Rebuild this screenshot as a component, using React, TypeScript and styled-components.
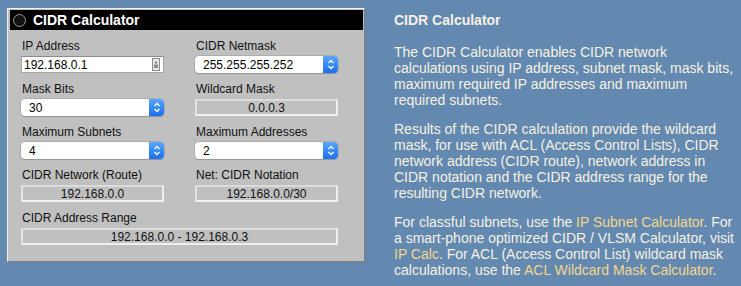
import React from "react";
import styled, { createGlobalStyle } from "styled-components";

const Global = createGlobalStyle`
  html, body { margin: 0; padding: 0; background: #6389b0; }
  body { font-family: "Liberation Sans", Arial, sans-serif; width: 741px; height: 286px; overflow: hidden; }
`;

const Page = styled.div`
  display: flex;
  align-items: flex-start;
  width: 741px;
  height: 286px;
`;

const Panel = styled.div`
  margin: 8px 0 0 7px;
  width: 353px;
  background: #c0c0c0;
  border-top: 1px solid #f2f2f2;
  border-left: 1px solid #f2f2f2;
  border-right: 1px solid #7d7d7d;
  border-bottom: 1px solid #7d7d7d;
  padding: 1px 1px 16px 2px;
`;

const Header = styled.div`
  height: 20px;
  background: #000;
  display: flex;
  align-items: center;
  gap: 7px;
  padding-left: 3px;
  color: #fff;
  font-weight: bold;
  font-size: 14px;
`;

const Radio = styled.span`
  width: 11px;
  height: 11px;
  border-radius: 50%;
  border: 1px solid #9a9a9a;
  background: #111;
  display: inline-block;
`;

const Grid = styled.div`
  display: grid;
  grid-template-columns: 143px 143px;
  column-gap: 31px;
  row-gap: 9px;
  padding: 9px 0 0 11px;
`;

const Field = styled.div<{ $wide?: boolean }>`
  display: flex;
  flex-direction: column;
  grid-column: ${(p) => (p.$wide ? "1 / span 2" : "auto")};
`;

const Label = styled.div`
  font-size: 12px;
  line-height: 14px;
  color: #111;
  margin: 0 0 3px 1px;
  white-space: nowrap;
`;

const TextInput = styled.div`
  height: 17px;
  box-sizing: border-box;
  background: #fff;
  border: 1px solid #a6a6a6;
  border-top-color: #8c8c8c;
  display: flex;
  align-items: center;
  justify-content: space-between;
  padding: 0 3px 0 2px;
  font-size: 12px;
  color: #000;
`;

const SelectBox = styled.div`
  height: 17px;
  box-sizing: border-box;
  background: #fff;
  border-radius: 4px;
  box-shadow: 0 0 0 0.5px #9a9a9a, 0 1px 1px rgba(0, 0, 0, 0.25);
  display: flex;
  align-items: center;
  overflow: hidden;
  font-size: 12px;
  color: #000;
`;

const SelectValue = styled.span`
  flex: 1;
  padding-left: 8px;
`;

const Arrow = styled.span`
  width: 15px;
  height: 100%;
  background: linear-gradient(#5aa6fb, #1a6ff0);
  display: flex;
  align-items: center;
  justify-content: center;
`;

const Output = styled.div`
  height: 17px;
  box-sizing: border-box;
  border: 2px solid #f0f0f0;
  border-top-color: #dcdcdc;
  border-left-color: #e4e4e4;
  display: flex;
  align-items: center;
  justify-content: center;
  font-size: 12px;
  color: #111;
`;

const Info = styled.div`
  margin: 12px 0 0 29px;
  width: 345px;
  color: #f6f1e4;
  font-size: 14px;
  line-height: 16px;
`;

const InfoTitle = styled.div`
  font-weight: bold;
  margin-bottom: 16px;
`;

const Para = styled.p`
  margin: 0 0 13px 0;
`;

const Link = styled.span`
  color: #f5d58c;
`;

const Chevrons = () => (
  <svg width="8" height="11" viewBox="0 0 8 11">
    <path d="M1.5 4 L4 1.5 L6.5 4 M1.5 7 L4 9.5 L6.5 7" fill="none" stroke="#fff" strokeWidth="1.3" />
  </svg>
);

const KeyIcon = () => (
  <svg width="8" height="13" viewBox="0 0 8 13">
    <rect x="0.5" y="0.5" width="7" height="12" fill="#e8e8e8" stroke="#8a8a8a" />
    <circle cx="4" cy="4.5" r="1.3" fill="#8a8a8a" />
    <rect x="2" y="6.5" width="4" height="3.5" fill="#8a8a8a" />
  </svg>
);

const Select = ({ value }: { value: string }) => (
  <SelectBox>
    <SelectValue>{value}</SelectValue>
    <Arrow>
      <Chevrons />
    </Arrow>
  </SelectBox>
);

export default function App() {
  return (
    <Page>
      <Global />
      <Panel>
        <Header>
          <Radio />
          CIDR Calculator
        </Header>
        <Grid>
          <Field>
            <Label>IP Address</Label>
            <TextInput>
              <span>192.168.0.1</span>
              <KeyIcon />
            </TextInput>
          </Field>
          <Field>
            <Label>CIDR Netmask</Label>
            <Select value="255.255.255.252" />
          </Field>
          <Field>
            <Label>Mask Bits</Label>
            <Select value="30" />
          </Field>
          <Field>
            <Label>Wildcard Mask</Label>
            <Output>0.0.0.3</Output>
          </Field>
          <Field>
            <Label>Maximum Subnets</Label>
            <Select value="4" />
          </Field>
          <Field>
            <Label>Maximum Addresses</Label>
            <Select value="2" />
          </Field>
          <Field>
            <Label>CIDR Network (Route)</Label>
            <Output>192.168.0.0</Output>
          </Field>
          <Field>
            <Label>Net: CIDR Notation</Label>
            <Output>192.168.0.0/30</Output>
          </Field>
          <Field $wide>
            <Label>CIDR Address Range</Label>
            <Output>192.168.0.0 - 192.168.0.3</Output>
          </Field>
        </Grid>
      </Panel>
      <Info>
        <InfoTitle>CIDR Calculator</InfoTitle>
        <Para>
          The CIDR Calculator enables CIDR network calculations using IP address, subnet mask, mask bits,
          maximum required IP addresses and maximum required subnets.
        </Para>
        <Para>
          Results of the CIDR calculation provide the wildcard mask, for use with ACL (Access Control Lists),
          CIDR network address (CIDR route), network address in CIDR notation and the CIDR address range for
          the resulting CIDR network.
        </Para>
        <Para>
          For classful subnets, use the <Link>IP Subnet Calculator</Link>. For a smart-phone optimized CIDR /
          VLSM Calculator, visit <Link>IP Calc</Link>. For ACL (Access Control List) wildcard mask
          calculations, use the <Link>ACL Wildcard Mask Calculator</Link>.
        </Para>
      </Info>
    </Page>
  );
}
